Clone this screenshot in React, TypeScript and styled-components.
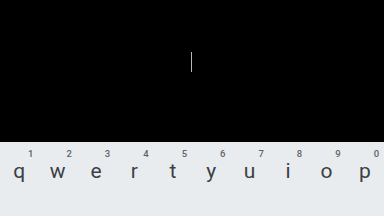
import React from "react";
import styled, { createGlobalStyle } from "styled-components";

const GlobalStyle = createGlobalStyle`
  html, body {
    margin: 0;
    padding: 0;
    background: #000;
    font-family: Roboto, "Noto Sans", sans-serif;
  }
`;

const Screen = styled.div`
  width: 384px;
  height: 216px;
  display: flex;
  flex-direction: column;
  overflow: hidden;
`;

const Canvas = styled.div`
  flex: 1;
  background: #000;
  display: flex;
  justify-content: center;
  padding-top: 52px;
  box-sizing: border-box;
`;

const Cursor = styled.div`
  width: 1px;
  height: 20px;
  margin-left: -1px;
  background: #b8b8b8;
`;

const Keyboard = styled.div`
  height: 74px;
  background: #e9ecef;
  display: flex;
  flex-direction: column;
`;

const Row = styled.div`
  display: flex;
  height: 44px;
`;

const Key = styled.div`
  position: relative;
  flex: 1;
  display: flex;
  align-items: flex-end;
  justify-content: center;
  padding-bottom: 4px;
  box-sizing: border-box;
`;

const Letter = styled.span`
  font-size: 21px;
  line-height: 21px;
  color: #3c4043;
`;

const Hint = styled.span`
  position: absolute;
  top: 7px;
  right: 5px;
  font-size: 9.5px;
  line-height: 9px;
  font-weight: 500;
  color: #5f6368;
`;

const keys = [
  ["q", "1"],
  ["w", "2"],
  ["e", "3"],
  ["r", "4"],
  ["t", "5"],
  ["y", "6"],
  ["u", "7"],
  ["i", "8"],
  ["o", "9"],
  ["p", "0"],
];

const App: React.FC = () => {
  return (
    <>
      <GlobalStyle />
      <Screen>
        <Canvas>
          <Cursor />
        </Canvas>
        <Keyboard>
          <Row>
            {keys.map(([letter, hint]) => (
              <Key key={letter}>
                <Letter>{letter}</Letter>
                <Hint>{hint}</Hint>
              </Key>
            ))}
          </Row>
        </Keyboard>
      </Screen>
    </>
  );
};

export default App;
